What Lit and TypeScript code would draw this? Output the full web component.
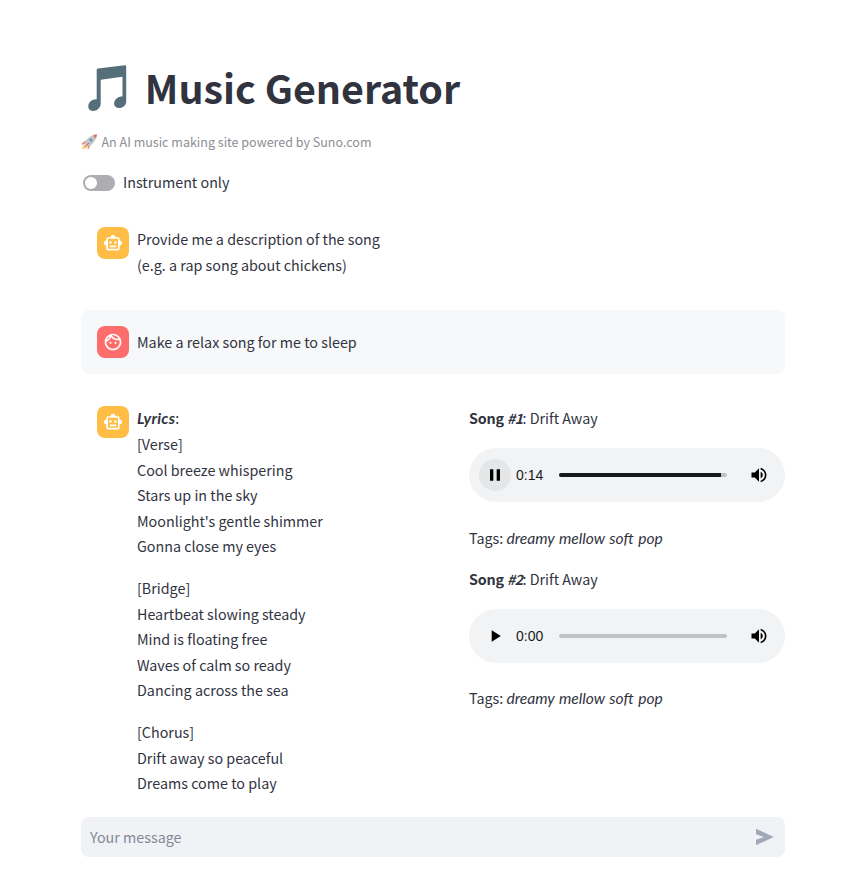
import { LitElement, html, css, svg } from "lit";
import { customElement, property } from "lit/decorators.js";
import { styleMap } from "lit/directives/style-map.js";

const ROBOT =
  "M20 9V7c0-1.1-.9-2-2-2h-3c0-1.66-1.34-3-3-3S9 3.34 9 5H6c-1.1 0-2 .9-2 2v2c-1.66 0-3 1.34-3 3s1.34 3 3 3v4c0 1.1.9 2 2 2h12c1.1 0 2-.9 2-2v-4c1.66 0 3-1.34 3-3s-1.34-3-3-3zm-2 10H6V7h12v12zm-9-6c-.83 0-1.5-.67-1.5-1.5S8.17 10 9 10s1.5.67 1.5 1.5S9.83 13 9 13zm7.5-1.5c0 .83-.67 1.5-1.5 1.5s-1.5-.67-1.5-1.5.67-1.5 1.5-1.5 1.5.67 1.5 1.5zM8 15h8v2H8v-2z";
const FACE =
  "M10.25 13c0 .69-.56 1.25-1.25 1.25S7.75 13.69 7.75 13s.56-1.25 1.25-1.25 1.25.56 1.25 1.25zM15 11.75c-.69 0-1.25.56-1.25 1.25s.56 1.25 1.25 1.25 1.25-.56 1.25-1.25-.56-1.25-1.25-1.25zm7 .25c0 5.52-4.48 10-10 10S2 17.52 2 12 6.48 2 12 2s10 4.48 10 10zM10.66 4.12C12.06 6.44 14.6 8 17.5 8c.46 0 .91-.05 1.34-.12C17.44 5.56 14.9 4 12 4c-.46 0-.91.05-1.34.12zM4.42 9.47c1.71-.97 3.03-2.55 3.66-4.44C6.37 6 5.05 7.58 4.42 9.47zM20 12c0-.78-.12-1.53-.33-2.24-.7.15-1.42.24-2.17.24-3.13 0-5.92-1.44-7.76-3.69C8.69 8.87 6.6 10.88 4 11.86c.01.04 0 .09 0 .14 0 4.42 3.58 8 8 8s8-3.58 8-8z";
const PLAY = "M8 5v14l11-7z";
const PAUSE = "M6 19h4V5H6v14zm8-14v14h4V5h-4z";
const VOLUME =
  "M3 9v6h4l5 5V4L7 9H3zm13.5 3c0-1.77-1.02-3.29-2.5-4.03v8.05c1.48-.73 2.5-2.25 2.5-4.02zM14 3.23v2.06c2.89.86 5 3.54 5 6.71s-2.11 5.85-5 6.71v2.06c4.01-.91 7-4.49 7-8.77s-2.99-7.86-7-8.77z";
const SEND = "M1.200 2.200V8.600L11 12 1.200 15.400V21.800L22.600 12z";

@customElement("chat-message")
export class ChatMessage extends LitElement {
  @property() role: "assistant" | "user" | null = "assistant";

  static styles = css`
    :host { display: block; }
    .message { display: flex; gap: 8px; padding: 16px; border-radius: 8px; }
    .message.user { background: #f7f8fa; }
    .avatar {
      flex: none; width: 32px; height: 32px; border-radius: 8px;
      display: flex; align-items: center; justify-content: center;
      background: #ffbd45; color: #fff;
    }
    .user .avatar { background: #ff6c6c; }
    .avatar svg { width: 20px; height: 20px; fill: currentColor; display: block; }
    .body { flex: 1; min-width: 0; margin: -0.55px -16px 0 0; }
    .user .body { margin-top: 0; padding-top: 3px; }
  `;

  render() {
    return html`<div class="message ${this.role}">
      <div class="avatar">
        <svg viewBox="0 0 24 24"><path d=${this.role === "user" ? FACE : ROBOT} /></svg>
      </div>
      <div class="body"><slot></slot></div>
    </div>`;
  }
}

@customElement("audio-player")
export class AudioPlayer extends LitElement {
  @property() time = "0:00";
  @property({ type: Number }) progress = 0;
  @property({ type: Boolean }) playing = false;

  static styles = css`
    :host { display: block; }
    .player {
      box-sizing: border-box; height: 54px; border-radius: 27px; background: #f1f3f4;
      display: flex; align-items: center; padding: 0 10px;
      font: 14px/16px "Liberation Sans", Arial, sans-serif; color: #1b1b1b;
    }
    .button {
      width: 32px; height: 32px; border-radius: 50%; flex: none;
      display: flex; align-items: center; justify-content: center;
    }
    .button.active { background: #e5e6e7; }
    .button svg { width: 20px; height: 20px; display: block; }
    .time { width: 43px; margin-left: 5px; flex: none; }
    .track { flex: 1; height: 4px; border-radius: 2px; background: #c1c2c3; overflow: hidden; }
    .fill { height: 4px; background: #17181a; }
    .volume { margin-left: 16px; }
  `;

  render() {
    return html`<div class="player">
      <div class="button ${this.playing ? "active" : ""}">
        <svg viewBox="0 0 24 24"><path d=${this.playing ? PAUSE : PLAY} /></svg>
      </div>
      <div class="time">${this.time}</div>
      <div class="track">
        <div class="fill" style=${styleMap({ width: `${this.progress}%` })}></div>
      </div>
      <div class="button volume"><svg viewBox="0 0 24 24"><path d=${VOLUME} /></svg></div>
    </div>`;
  }
}

const VERSES = [
  ["[Verse]", "Cool breeze whispering", "Stars up in the sky", "Moonlight's gentle shimmer", "Gonna close my eyes"],
  ["[Bridge]", "Heartbeat slowing steady", "Mind is floating free", "Waves of calm so ready", "Dancing across the sea"],
  ["[Chorus]", "Drift away so peaceful", "Dreams come to play"],
];

const SONGS = [
  { n: 1, title: "Drift Away", time: "0:14", progress: 96.4, playing: true, tags: "dreamy mellow soft pop" },
  { n: 2, title: "Drift Away", time: "0:00", progress: 0, playing: false, tags: "dreamy mellow soft pop" },
];

const note = svg`<path fill="#546e7a" d="M8.700 4.800 Q8.700 3.700 10 3.500 L36.800 0.300 Q38.200 0.200 38.200 1.500 V36.500 C38.200 40.500 34.500 43.200 30.800 43 C27.500 42.800 25.600 40.500 26.200 37.500 C26.900 34 30.500 31.200 34.500 31.500 V11.700 L12.700 14.800 V38.500 C12.700 42.600 9 46 5 46 C1.900 46 0 43.800 0.300 40.800 C0.700 37 4.300 34 8.700 34.300 Z"/>`;

const rocket = svg`
  <path fill="#f9d27c" d="M1 16.800c.4-2.600 1.200-4.700 3.200-5.500l2.400 2.400c-.8 2-2.900 2.700-5.600 3.100z"/>
  <path fill="#ee8a79" d="M5.300 7.200 1 10.200l-.4 1.700 4-.8zM10.500 12.300l-2.800 4.500-.5.700-.2-4z"/>
  <path fill="#c0c8cd" d="M3.800 10.700C5.200 6.300 9 2.400 14 1.800l2 2c-.6 5-4.500 8.800-9.300 10.200z"/>
  <path fill="#e5756a" d="M12.500 2.100Q14.600.8 17 .8q0 2.300-1.300 4.500z"/>
  <circle cx="10.500" cy="7" r="1.600" fill="#7a8f9a"/>
  <path fill="#bd6c6c" d="m4 13.700 4.200-4.200.8.700-4.400 4.200z"/>`;

@customElement("app-root")
export class AppRoot extends LitElement {
  static styles = css`
    :host {
      display: block; box-sizing: border-box; width: 844px; height: 892px; overflow: hidden;
      padding: 60px 59px 0 81px; background: #fff; color: #31333f;
      font: 14.32px/25.6px "Noto Sans CJK SC", "Noto Sans CJK JP", sans-serif;
    }
    .title {
      display: flex; align-items: center; margin: 0; height: 53px; gap: 17.8px;
      font-size: 39.4px; line-height: 53px; font-weight: 700; color: #31333f; white-space: nowrap;
    }
    .note { width: 39px; height: 46px; margin: 2px 0 0 7px; flex: none; }
    .caption {
      display: flex; gap: 3.5px; align-items: center; height: 22px; margin-top: 18px;
      font-size: 12.53px; line-height: 22px; color: #8d8e95;
    }
    .rocket { width: 17px; height: 18px; flex: none; }
    .option { display: flex; align-items: center; gap: 8px; height: 26px; margin: 17px 0 15px 2px; }
    .option span { margin-top: -2px; }
    .toggle { width: 32px; height: 16px; box-sizing: border-box; padding: 2px; border-radius: 8px; background: #adadb2; }
    .knob { width: 12px; height: 12px; border-radius: 50%; background: #fff; }
    .first { height: 99px; }
    .reply { margin-top: 16px; height: 427px; }
    p { margin: 0 0 16px; white-space: nowrap; }
    .columns { display: grid; grid-template-columns: 316px 316px; gap: 16px; }
    strong { font-weight: 700; letter-spacing: -0.15px; }
    em { font-family: Lato, sans-serif; font-size: 15.65px; line-height: 0; word-spacing: 0.8px; }
    em.number { font-family: inherit; font-size: 14px; letter-spacing: -0.6px; }
    em.label { letter-spacing: 0.25px; }
    audio-player { margin: 16.75px 0 22.8px; }
    .input {
      height: 40px; border-radius: 8px; background: #f0f2f6; color: #838996;
      display: flex; align-items: center; justify-content: space-between; padding: 0 10px 0 9px;
    }
    .send { width: 20px; height: 20px; fill: #a3a8b8; }
  `;

  render() {
    return html`
      <h1 class="title"><svg class="note" viewBox="0 0 39 46">${note}</svg><span>Music Generator</span></h1>
      <div class="caption"><svg class="rocket" viewBox="0 0 18 18">${rocket}</svg><span>An AI music making site powered by Suno.com</span></div>
      <div class="option"><div class="toggle"><div class="knob"></div></div><span>Instrument only</span></div>
      <chat-message class="first"><p>Provide me a description of the song<br />(e.g. a rap song about chickens)</p></chat-message>
      <chat-message class="prompt" role="user"><div>Make a relax song for me to sleep</div></chat-message>
      <chat-message class="reply">
        <div class="columns">
          <div>
            ${VERSES.map(
              (lines, i) => html`<p>${i === 0 ? html`<strong><em class="label">Lyrics</em></strong>:<br />` : ""}${lines.map(
                (line, j) => html`${j ? html`<br />` : ""}${line}`
              )}</p>`
            )}
          </div>
          <div>
            ${SONGS.map(
              (s) => html`<p><strong>Song <em class="number">#${s.n}</em></strong>: ${s.title}</p>
                <audio-player .time=${s.time} .progress=${s.progress} .playing=${s.playing}></audio-player>
                <p>Tags: <em>${s.tags}</em></p>`
            )}
          </div>
        </div>
      </chat-message>
      <div class="input"><span>Your message</span><svg class="send" viewBox="0 0 24 24"><path d=${SEND} /></svg></div>
    `;
  }
}
